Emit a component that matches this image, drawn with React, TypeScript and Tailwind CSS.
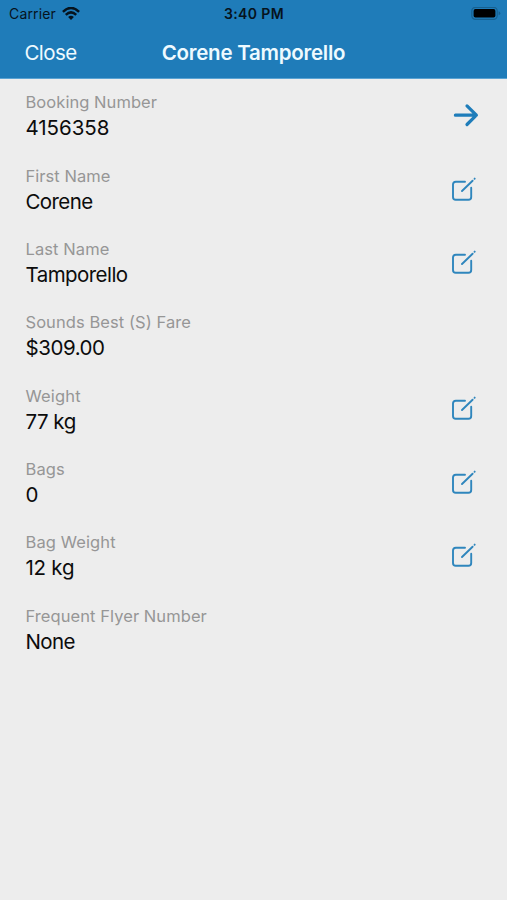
type Action = 'open' | 'edit' | null;

interface Field {
  label: string;
  value: string;
  action: Action;
  labelSpacing: string;
  valueSpacing: string;
}

const fields: Field[] = [
  { label: 'Booking Number', value: '4156358', action: 'open', labelSpacing: 'tracking-[0.06px]', valueSpacing: 'tracking-[-0.05px]' },
  { label: 'First Name', value: 'Corene', action: 'edit', labelSpacing: 'tracking-[0.04px]', valueSpacing: 'tracking-[-0.6px]' },
  { label: 'Last Name', value: 'Tamporello', action: 'edit', labelSpacing: 'tracking-[0.1px]', valueSpacing: 'tracking-[-0.55px]' },
  { label: 'Sounds Best (S) Fare', value: '$309.00', action: null, labelSpacing: 'tracking-[0.07px]', valueSpacing: 'tracking-[-0.45px]' },
  { label: 'Weight', value: '77 kg', action: 'edit', labelSpacing: 'tracking-[0.15px]', valueSpacing: 'tracking-[-0.5px]' },
  { label: 'Bags', value: '0', action: 'edit', labelSpacing: 'tracking-[0.1px]', valueSpacing: 'tracking-[-0.4px]' },
  { label: 'Bag Weight', value: '12 kg', action: 'edit', labelSpacing: 'tracking-[0.1px]', valueSpacing: 'tracking-[-0.25px]' },
  { label: 'Frequent Flyer Number', value: 'None', action: null, labelSpacing: 'tracking-[0.07px]', valueSpacing: 'tracking-[-0.65px]' },
];

function ArrowIcon() {
  return (
    <svg width="26" height="24" viewBox="0 0 26 24" fill="none" stroke="#1f7dba" strokeWidth="3.2" strokeLinecap="round" strokeLinejoin="round">
      <path d="M2.4 12.2H23.2M14 2.9L23.4 12.2L14 21.5" />
    </svg>
  );
}

function EditIcon() {
  return (
    <svg width="26" height="26" viewBox="0 0 26 26" fill="none" stroke="#2f86bd" strokeWidth="1.9" strokeLinecap="round">
      <path d="M14 4.7H4.8Q2 4.7 2 7.5V20Q2 22.8 4.8 22.8H17.4Q20.2 22.8 20.2 20V10.8" />
      <path d="M11 14L21.6 3.7M23.5 1.8L23.7 1.6" />
    </svg>
  );
}

function WifiIcon() {
  return (
    <svg width="18" height="14" viewBox="0 0 18 14" fill="none" stroke="#06131d" strokeWidth="2.5">
      <path d="M0.9 4.8Q9 -2.9 17.1 4.8" />
      <path d="M3.8 7.8Q9 3 14.2 7.8" />
      <path d="M6.1 10Q9 7.4 11.9 10L9 13Z" fill="#06131d" stroke="none" />
    </svg>
  );
}

function BatteryIcon() {
  return (
    <svg width="30" height="14" viewBox="0 0 30 14">
      <rect x="0.8" y="0.3" width="25.4" height="12" rx="3.6" fill="none" stroke="#17608f" strokeWidth="1.2" />
      <rect x="2.6" y="2.1" width="21.8" height="8.4" rx="1.8" fill="#000" />
      <path d="M27.6 4.3Q29.3 4.9 29.3 6.3Q29.3 7.7 27.6 8.3Z" fill="#17608f" />
    </svg>
  );
}

function FieldRow({ field }: { field: Field }) {
  return (
    <div className="flex h-[73.3px] items-start justify-between pl-[25.5px]">
      <div className="pt-[11.44px]">
        <div className={`h-[24px] whitespace-nowrap text-[16.5px] leading-[24px] text-[#969696] ${field.labelSpacing}`}>{field.label}</div>
        <div className={`h-[28px] whitespace-nowrap text-[20.5px] leading-[28px] text-[#0c0c0c] ${field.valueSpacing}`}>{field.value}</div>
      </div>
      {field.action === 'open' && (
        <button aria-label="Open booking" className="mr-[28px] mt-[24px]">
          <ArrowIcon />
        </button>
      )}
      {field.action === 'edit' && (
        <button aria-label={`Edit ${field.label}`} className="mr-[30px] mt-[24.3px]">
          <EditIcon />
        </button>
      )}
    </div>
  );
}

export default function App() {
  return (
    <div className="flex h-[900px] w-[507px] flex-col overflow-hidden bg-[#ededed] font-['Inter',sans-serif]">
      <header className="h-[79px] shrink-0 border-b border-[#5aa3d3] bg-[#1f7cb9]">
        <div className="grid h-[27px] grid-cols-3 items-center text-[#06131d]">
          <div className="flex items-center gap-[6px] pl-[9px]">
            <span className="text-[14px] leading-[27px] tracking-[0.15px]">Carrier</span>
            <WifiIcon />
          </div>
          <div className="pl-px text-center text-[14px] font-semibold leading-[27px] tracking-[0.4px]">3:40 PM</div>
          <div className="flex justify-end pr-[6px]">
            <BatteryIcon />
          </div>
        </div>
        <div className="grid h-[51px] grid-cols-[1fr_auto_1fr] items-center text-[#eefaff]">
          <button className="pl-[24.5px] text-left text-[20.5px] leading-[50px] tracking-[-0.6px]">Close</button>
          <h1 className="text-[20.5px] font-semibold leading-[50px] tracking-[-0.24px]">Corene Tamporello</h1>
          <span />
        </div>
      </header>
      <main className="flex flex-col">
        {fields.map((field) => (
          <FieldRow key={field.label} field={field} />
        ))}
      </main>
    </div>
  );
}
